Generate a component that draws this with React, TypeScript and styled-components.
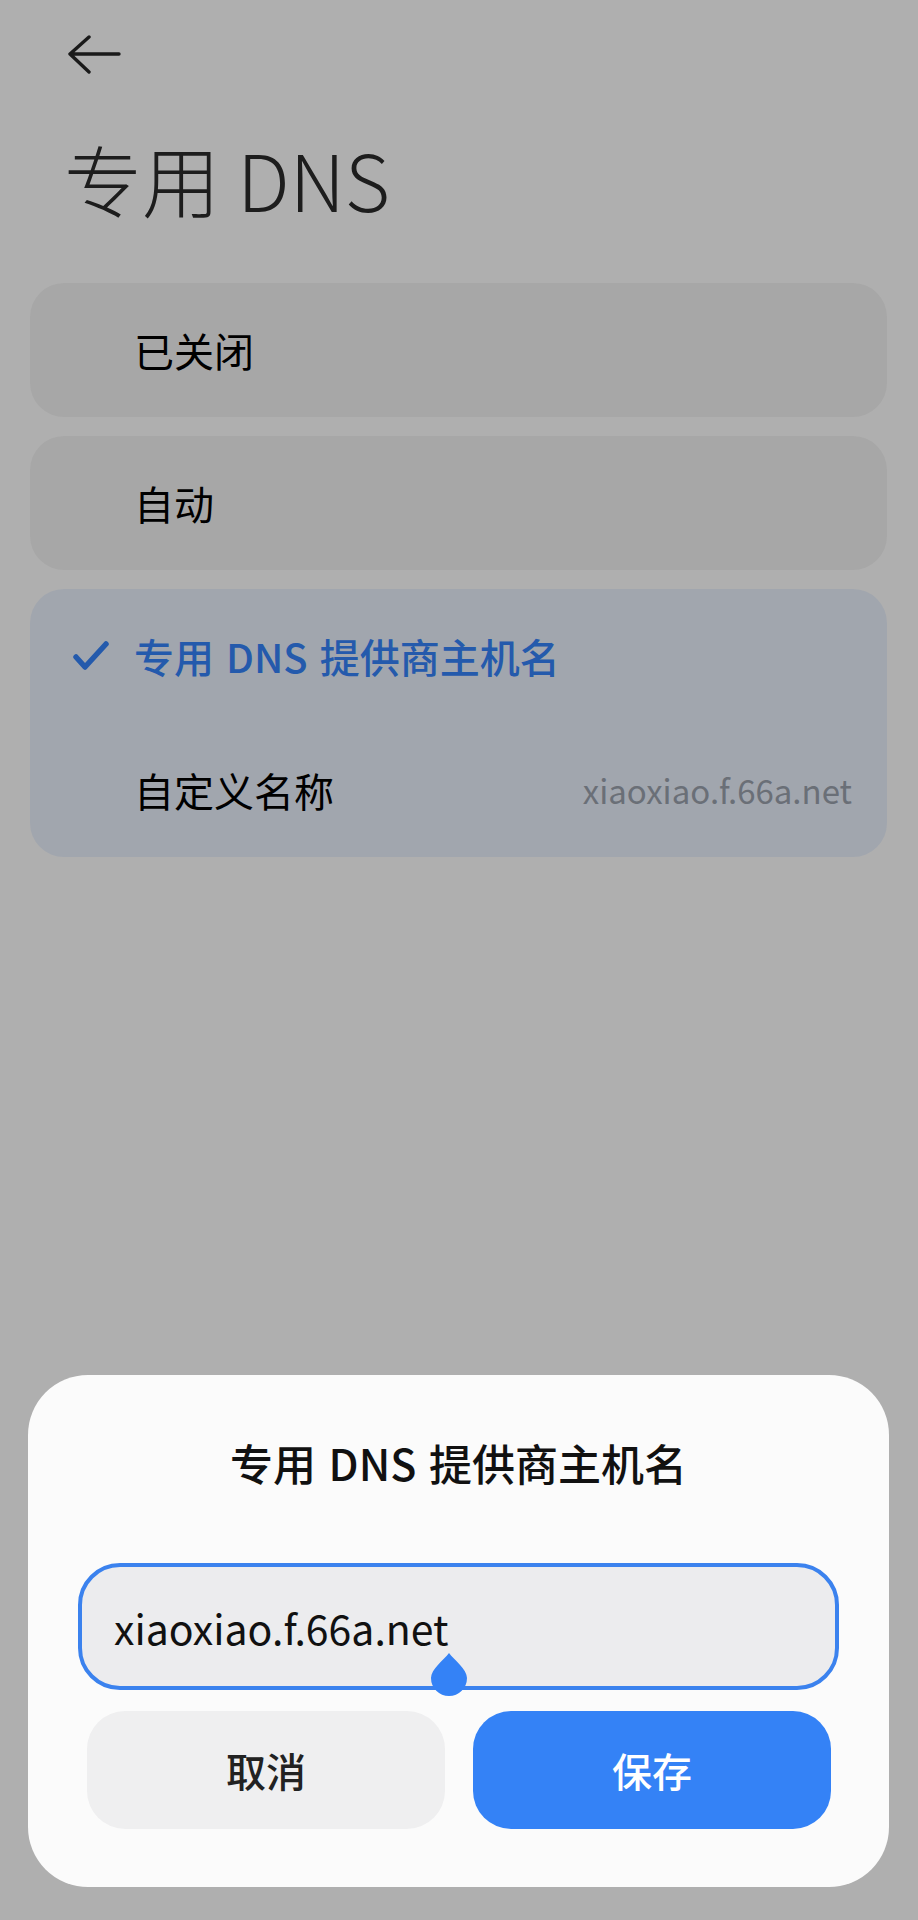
import React from "react";
import styled, { createGlobalStyle } from "styled-components";

const GlobalStyle = createGlobalStyle`
  html, body {
    margin: 0;
    padding: 0;
    background: #fbfbfb;
  }
  body {
    font-family: "Noto Sans CJK SC", "Noto Sans", sans-serif;
    color: #000;
    -webkit-font-smoothing: antialiased;
  }
  * { box-sizing: border-box; }
`;

const Page = styled.div`
  position: relative;
  min-height: 1920px;
  padding: 0 31px 0 30px;
  overflow: hidden;
`;

const TopBar = styled.div`
  display: flex;
  align-items: center;
  height: 73px;
  padding: 37px 0 0 37px;
`;

const BackButton = styled.button`
  display: flex;
  align-items: center;
  justify-content: center;
  border: 0;
  background: transparent;
  padding: 0;
  color: #262626;
  cursor: pointer;
`;

const Title = styled.h1`
  margin: 55px 0 0 34px;
  font-size: 78px;
  line-height: 100px;
  font-weight: 300;
  color: #2a2a2a;
  letter-spacing: 0;
`;

const OptionList = styled.div`
  display: flex;
  flex-direction: column;
  gap: 19px;
  margin-top: 55px;
`;

const Card = styled.div<{ $selected?: boolean }>`
  display: flex;
  flex-direction: column;
  border-radius: 34px;
  background: ${(p) => (p.$selected ? "#e7eefa" : "#f0f0f0")};
`;

const Row = styled.div`
  display: flex;
  align-items: center;
  height: 134px;
  padding: 0 35px 0 41px;
`;

const CheckSlot = styled.div`
  width: 63px;
  flex: none;
  display: flex;
  align-items: center;
  color: #3482f6;
`;

const Label = styled.span<{ $active?: boolean }>`
  flex: 1;
  font-size: 40px;
  line-height: 50px;
  font-weight: ${(p) => (p.$active ? 500 : 400)};
  color: ${(p) => (p.$active ? "#3482f6" : "#000")};
  word-spacing: ${(p) => (p.$active ? "3px" : "0")};
  white-space: nowrap;
`;

const Value = styled.span`
  font-size: 33px;
  line-height: 50px;
  color: #99a0ab;
  white-space: nowrap;
`;

const Scrim = styled.div`
  position: fixed;
  inset: 0;
  background: rgba(0, 0, 0, 0.3);
`;

const Dialog = styled.div`
  position: absolute;
  left: 28px;
  right: 29px;
  bottom: 33px;
  display: flex;
  flex-direction: column;
  align-items: stretch;
  padding: 62px 50px 58px;
  border-radius: 60px;
  background: #fbfbfb;
`;

const DialogTitle = styled.div`
  text-align: center;
  font-size: 43px;
  line-height: 50px;
  font-weight: 500;
  color: #111;
  word-spacing: 3px;
`;

const Field = styled.div`
  display: flex;
  align-items: center;
  height: 127px;
  margin-top: 76px;
  padding: 0 32px;
  border: 4px solid #3b82ee;
  border-radius: 42px;
  background: #ececee;
`;

const FieldText = styled.span`
  position: relative;
  font-size: 41px;
  line-height: 54px;
  color: #111;
  white-space: nowrap;
`;

const Handle = styled.svg`
  position: absolute;
  right: -19px;
  top: 52px;
`;

const Actions = styled.div`
  display: grid;
  grid-template-columns: 1fr 1fr;
  gap: 28px;
  margin: 21px 8px 0 9px;
`;

const ActionButton = styled.button<{ $primary?: boolean }>`
  height: 118px;
  border: 0;
  border-radius: 38px;
  font-family: inherit;
  font-size: 40px;
  font-weight: 500;
  color: ${(p) => (p.$primary ? "#fff" : "#222")};
  background: ${(p) => (p.$primary ? "#3482f6" : "#efeff0")};
  cursor: pointer;
`;

const ArrowLeft = () => (
  <svg width="54" height="40" viewBox="0 0 54 40" fill="none">
    <path
      d="M52 19H3M22 2L3 19L22 37"
      stroke="currentColor"
      strokeWidth="3.4"
      strokeLinecap="round"
      strokeLinejoin="round"
    />
  </svg>
);

const Check = () => (
  <svg width="40" height="34" viewBox="0 0 40 34" fill="none">
    <path
      d="M5 18L14 28L35 5"
      stroke="currentColor"
      strokeWidth="5.5"
      strokeLinecap="round"
      strokeLinejoin="round"
    />
  </svg>
);

const options = [
  { key: "off", label: "已关闭" },
  { key: "auto", label: "自动" },
];

export default function App() {
  const host = "xiaoxiao.f.66a.net";
  return (
    <>
      <GlobalStyle />
      <Page>
        <TopBar>
          <BackButton aria-label="返回">
            <ArrowLeft />
          </BackButton>
        </TopBar>
        <Title>专用 DNS</Title>
        <OptionList>
          {options.map((o) => (
            <Card key={o.key}>
              <Row>
                <CheckSlot />
                <Label>{o.label}</Label>
              </Row>
            </Card>
          ))}
          <Card $selected>
            <Row>
              <CheckSlot>
                <Check />
              </CheckSlot>
              <Label $active>专用 DNS 提供商主机名</Label>
            </Row>
            <Row>
              <CheckSlot />
              <Label>自定义名称</Label>
              <Value>{host}</Value>
            </Row>
          </Card>
        </OptionList>
        <Scrim />
        <Dialog>
          <DialogTitle>专用 DNS 提供商主机名</DialogTitle>
          <Field>
            <FieldText>
              {host}
              <Handle width="38" height="45" viewBox="0 0 38 45">
                <path
                  d="M19 1C24 8 37 17 37 26A18 18 0 0 1 1 26C1 17 14 8 19 1Z"
                  fill="#3482f6"
                />
              </Handle>
            </FieldText>
          </Field>
          <Actions>
            <ActionButton>取消</ActionButton>
            <ActionButton $primary>保存</ActionButton>
          </Actions>
        </Dialog>
      </Page>
    </>
  );
}
